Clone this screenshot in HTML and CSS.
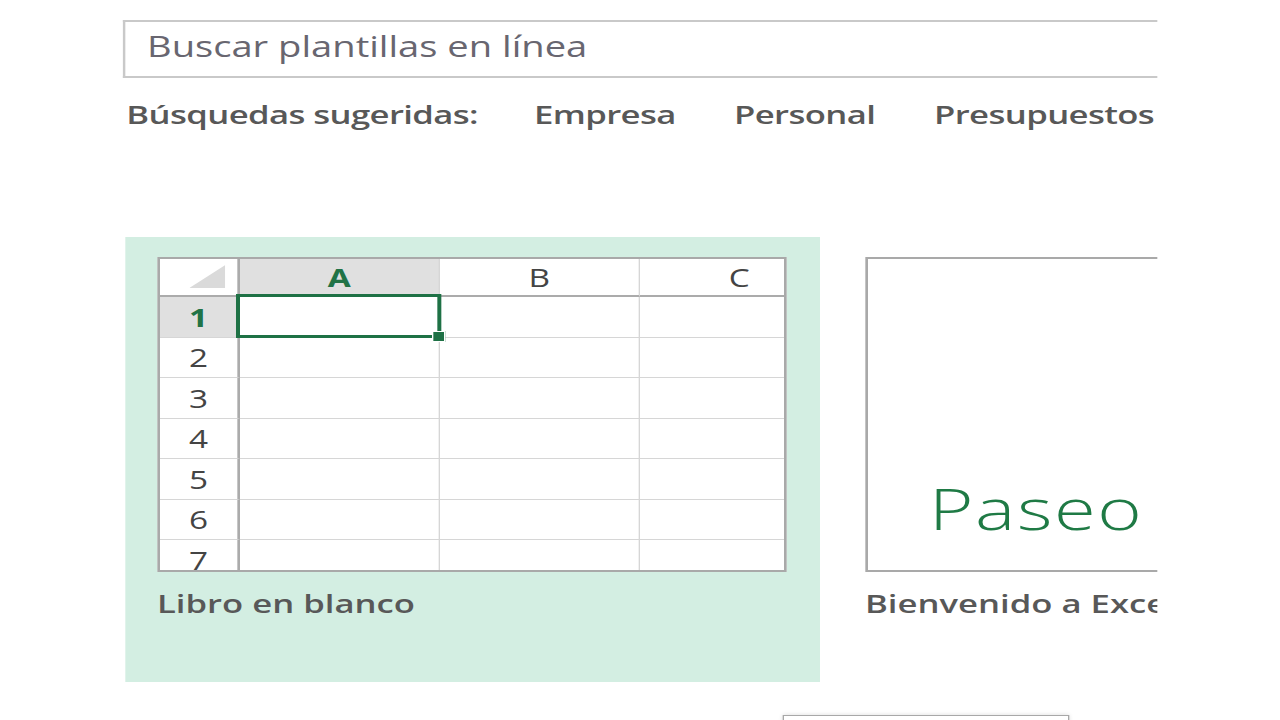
FILE: index.html
```html
<!DOCTYPE html>
<html lang="es">
<head>
<meta charset="utf-8">
<title>Excel - Nuevo</title>
<link rel="stylesheet" href="styles.css">
</head>
<body>
<div class="stage">
  <div class="content">
    <div class="search">Buscar plantillas en línea</div>
    <div class="suggest">
      <span class="s-label">Búsquedas sugeridas:</span>
      <span class="s-item">Empresa</span>
      <span class="s-item">Personal</span>
      <span class="s-item">Presupuestos</span>
    </div>
    <div class="tiles">
      <div class="tile selected">
        <div class="sheet">
          <div class="cell corner"><span class="tri"></span></div>
          <div class="cell colhead active">A</div>
          <div class="cell colhead">B</div>
          <div class="cell colhead">C</div>

          <div class="cell rowhead active">1</div>
          <div class="cell sel"></div>
          <div class="cell"></div>
          <div class="cell"></div>

          <div class="cell rowhead">2</div>
          <div class="cell"></div><div class="cell"></div><div class="cell"></div>
          <div class="cell rowhead">3</div>
          <div class="cell"></div><div class="cell"></div><div class="cell"></div>
          <div class="cell rowhead">4</div>
          <div class="cell"></div><div class="cell"></div><div class="cell"></div>
          <div class="cell rowhead">5</div>
          <div class="cell"></div><div class="cell"></div><div class="cell"></div>
          <div class="cell rowhead">6</div>
          <div class="cell"></div><div class="cell"></div><div class="cell"></div>
          <div class="cell rowhead">7</div>
          <div class="cell"></div><div class="cell"></div><div class="cell"></div>
        </div>
        <div class="caption">Libro en blanco</div>
      </div>
      <div class="tile">
        <div class="thumb"><span class="paseo">Paseo</span></div>
        <div class="caption">Bienvenido a Excel</div>
      </div>
    </div>
    <div class="tooltip"></div>
  </div>
</div>
</body>
</html>
```

FILE: styles.css
```css
html, body {
  margin: 0;
  padding: 0;
  background: #ffffff;
  overflow: hidden;
  height: 720px;
}

body {
  font-family: "Open Sans", "Noto Sans", sans-serif;
  color: #444444;
}

/* the reference is a 4:3 capture stretched to 16:9 */
.stage {
  width: 960px;
  height: 720px;
  transform: scaleX(1.33333);
  transform-origin: 0 0;
}

.content {
  margin-left: 92.25px;
  width: 775.5px;
  height: 720px;
  padding-top: 20px;
  box-sizing: border-box;
  overflow: hidden;
}

.search {
  width: 800px;
  height: 58px;
  box-sizing: border-box;
  border: 2px solid #c9c9c9;
  border-right: none;
  padding: 0 0 6px 16px;
  font-size: 28.6px;
  line-height: 48px;
  color: #686670;
  white-space: nowrap;
}

.suggest {
  display: flex;
  margin-top: 18px;
  padding-left: 2.5px;
  height: 36px;
  font-size: 26px;
  font-weight: 600;
  line-height: 36px;
  color: #585858;
  white-space: nowrap;
  letter-spacing: -0.45px;
}

.s-label {
  flex: 0 0 305.75px;
}

.s-item {
  flex: 0 0 150px;
}

.tiles {
  display: flex;
  gap: 9.75px;
  margin-top: 105px;
  margin-left: 1.5px;
}

.tile {
  flex: 0 0 auto;
  padding: 20px 24px 61px 24px;
}

.tile.selected {
  width: 521.25px;
  box-sizing: border-box;
  background: #d3eee2;
}

.sheet {
  display: grid;
  grid-template-columns: 60.25px 150px 150px 150px;
  grid-template-rows: 38px repeat(7, 40.5px);
  width: 472.5px;
  height: 315px;
  box-sizing: border-box;
  border: 2px solid #a9a9a9;
  background: #ffffff;
  overflow: hidden;
}

.cell {
  box-sizing: border-box;
  border-right: 1px solid #d6d6d6;
  border-bottom: 1px solid #d6d6d6;
  display: flex;
  align-items: center;
  justify-content: center;
  font-size: 25px;
  color: #444444;
}

.colhead {
  border-bottom: 2px solid #ababab;
}

.rowhead {
  border-right: 2px solid #ababab;
}

.corner {
  border-right: 2px solid #ababab;
  border-bottom: 2px solid #ababab;
  justify-content: flex-end;
  align-items: flex-end;
  padding: 0 9px 7px 0;
}

.tri {
  display: block;
  width: 27px;
  height: 23px;
  background: #dadada;
  clip-path: polygon(100% 0, 100% 100%, 0 100%);
}

.cell.active {
  background: #e0e0e0;
  color: #217346;
  font-weight: 700;
}

.sel {
  position: relative;
}

.sel::before {
  content: "";
  position: absolute;
  left: -3px;
  top: -3px;
  right: -1.5px;
  bottom: -1.5px;
  border: 3px solid #1e7145;
  z-index: 1;
}

.sel::after {
  content: "";
  position: absolute;
  right: -5px;
  bottom: -5.5px;
  width: 8px;
  height: 9px;
  background: #1e7145;
  border: 1px solid #ffffff;
  z-index: 2;
}

.caption {
  margin-top: 13px;
  font-size: 26px;
  font-weight: 600;
  line-height: 36px;
  color: #585858;
  white-space: nowrap;
}

.thumb {
  width: 472.5px;
  height: 315px;
  box-sizing: border-box;
  border: 2px solid #a9a9a9;
  display: flex;
  align-items: flex-end;
  padding: 0 0 24px 46px;
  background: #ffffff;
}

.paseo {
  font-size: 57px;
  font-weight: 300;
  line-height: 76px;
  letter-spacing: 1.2px;
  color: #1f7a45;
}

.tooltip {
  margin-top: 33px;
  margin-left: 494.25px;
  width: 215px;
  height: 40px;
  box-sizing: border-box;
  border: 1px solid #a8a8a8;
  background: #ffffff;
  box-shadow: 0 0 4px rgba(0, 0, 0, 0.15);
}
```
